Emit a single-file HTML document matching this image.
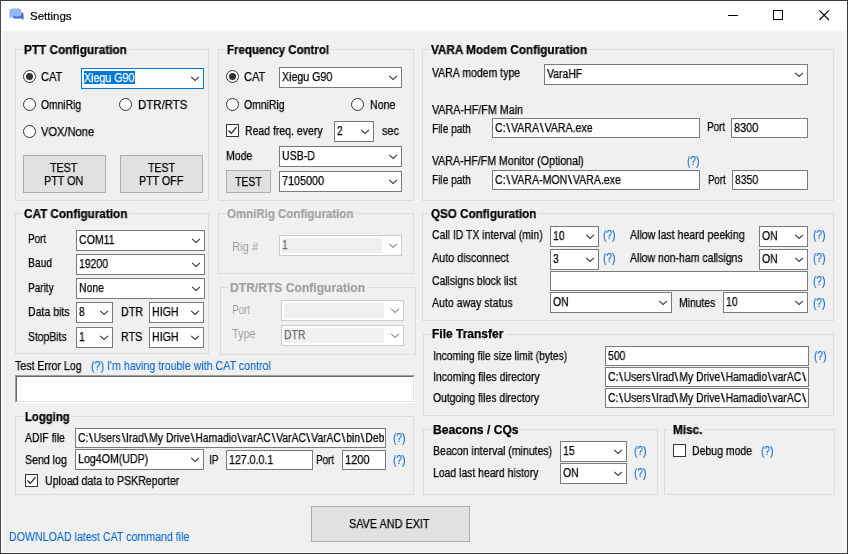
<!DOCTYPE html><html><head><meta charset="utf-8"><title>Settings</title><style>
html,body{margin:0;padding:0;background:#f0f0f0;}
body{width:848px;height:554px;overflow:hidden;font-family:"Liberation Sans",sans-serif;}
#win{position:relative;width:848px;height:554px;background:#f0f0f0;overflow:hidden;}
#win>*{position:absolute;box-sizing:content-box;}
.t{will-change:transform;-webkit-text-stroke:0.25px;font-size:12px;line-height:14px;color:#000;white-space:nowrap;transform-origin:0 0;display:block;}
.clip .t{position:absolute;}
.clip{overflow:hidden;}
.b{font-weight:bold;}
.dis{color:#a0a0a0;-webkit-text-stroke:0;}
.b.dis{-webkit-text-stroke:0.2px;}
.dis2{color:#6d6d6d;}
.lnk{color:#0066cc;-webkit-text-stroke:0.08px;}
.gb{border:1px solid #dcdcdc;}
.glbg{background:#f0f0f0;}
.cb{border:1px solid #7a7a7a;background:#fff;}
.cb .chev{position:absolute;right:3px;top:50%;margin-top:-2.5px;}
.cbf{border-color:#0078d7;}
.cbd{border-color:#cccccc;}
.cbd i{position:absolute;left:2px;top:2px;bottom:2px;right:19px;background:#f0f0f0;}
.tb{border:1px solid #7a7a7a;background:#fff;}
.btn{border:1px solid #adadad;background:#e1e1e1;}
.rd{width:11px;height:11px;border:1px solid #333;border-radius:50%;background:#fff;}
.rd b{position:absolute;left:2px;top:2px;width:7px;height:7px;border-radius:50%;background:#333;}
.ck{width:11px;height:11px;border:1px solid #333;background:#fff;}
.ck svg{position:absolute;left:0;top:0;}
.sel{background:#0078d7;}
.wt{color:#fff;}
.lb{border-top:1px solid #a0a0a0;border-left:1px solid #a0a0a0;border-right:1px solid #fff;border-bottom:1px solid #fff;background:#fff;}
.lb div{position:absolute;left:0;top:0;right:0;bottom:0;border-top:1px solid #696969;border-left:1px solid #696969;border-right:1px solid #e3e3e3;border-bottom:1px solid #e3e3e3;}
.t i{font-style:normal;display:inline-block;width:6.2px;text-align:center;transform:scaleX(1.35);}

</style></head><body><div id="win">
<div id="tbar" style="left:0;top:0;width:848px;height:31px;background:#fff"></div>
<svg id="ico" style="left:8px;top:7px" width="17" height="14" viewBox="0 0 17 14">
<path d="M6.500 5.500 h7 a2 2 0 0 1 2 2 v5.400 l-2.200 -1.500 h-6.800 a2 2 0 0 1 -2 -2 v-1.900 a2 2 0 0 1 2 -2z" fill="#3f66d0"/>
<path d="M3.700 1.600 h7.200 a2.500 2.500 0 0 1 2.500 2.500 v3 a2.500 2.500 0 0 1 -2.500 2.500 h-6.700 l-2.800 1.900 v-4.400 v-3 a2.500 2.500 0 0 1 2.300 -2.500z" fill="#92b6f5"/>
</svg>
<span class="tt" style="will-change:transform;left:30.2px;top:9px;-webkit-text-stroke:0.2px;font-size:11.5px;line-height:14px;color:#000;white-space:nowrap">Settings</span>
<svg style="left:720px;top:5px" width="120" height="22" viewBox="0 0 120 22">
<path d="M8 10.500 H18" stroke="#000" stroke-width="1" fill="none"/>
<rect x="53.500" y="5.500" width="9" height="9" stroke="#000" stroke-width="1" fill="none"/>
<path d="M99.300 5.300 L109 15 M109 5.300 L99.300 15" stroke="#000" stroke-width="1.1" fill="none"/>
</svg>
<div style="left:0;top:0;width:848px;height:1px;background:#3a3a3a"></div>
<div style="left:0;top:0;width:1px;height:554px;background:#4a4a4a"></div>
<div style="left:847px;top:0;width:1px;height:554px;background:#3a3a3a"></div>
<div style="left:0;top:553px;width:848px;height:1px;background:#3a3a3a"></div>
<div style="left:842px;top:31px;width:5px;height:521px;background:linear-gradient(90deg,#f2f2f2,#f9f9f9)"></div>
<div style="left:1px;top:552px;width:846px;height:1px;background:#fafafa"></div>
<div style="left:1px;top:31px;width:2px;height:521px;background:linear-gradient(90deg,#fbfbfb,#f4f4f4)"></div>

<div class="gb" style="left:15px;top:49px;width:192px;height:150px"></div>
<div class="glbg" style="left:22.5px;top:42px;width:106.25px;height:16px"></div>
<div class="rd" style="left:23px;top:70px"><b></b></div>
<div class="cb cbf" style="left:81px;top:68px;width:121px;height:19px"><svg class="chev" width="10" height="6" viewBox="0 0 10 6"><path d="M1.2 0.8 L5.1 4.5 L9 0.8" fill="none" stroke="#3a3a3a" stroke-width="1.1"/></svg></div>
<div class="sel" style="left:84px;top:71px;width:51px;height:13px"></div>
<div class="rd" style="left:23px;top:98px"></div>
<div class="rd" style="left:119px;top:98px"></div>
<div class="rd" style="left:23px;top:125px"></div>
<div class="btn" style="left:23px;top:155px;width:81px;height:36px"></div>
<div class="btn" style="left:120px;top:155px;width:81px;height:36px"></div>
<div class="gb" style="left:15px;top:213px;width:192px;height:139px"></div>
<div class="glbg" style="left:22px;top:206px;width:106.75px;height:16px"></div>
<div class="cb " style="left:76px;top:230px;width:127px;height:19px"><svg class="chev" width="10" height="6" viewBox="0 0 10 6"><path d="M1.2 0.8 L5.1 4.5 L9 0.8" fill="none" stroke="#3a3a3a" stroke-width="1.1"/></svg></div>
<div class="cb " style="left:76px;top:254px;width:127px;height:19px"><svg class="chev" width="10" height="6" viewBox="0 0 10 6"><path d="M1.2 0.8 L5.1 4.5 L9 0.8" fill="none" stroke="#3a3a3a" stroke-width="1.1"/></svg></div>
<div class="cb " style="left:76px;top:278px;width:127px;height:19px"><svg class="chev" width="10" height="6" viewBox="0 0 10 6"><path d="M1.2 0.8 L5.1 4.5 L9 0.8" fill="none" stroke="#3a3a3a" stroke-width="1.1"/></svg></div>
<div class="cb " style="left:76px;top:302px;width:35px;height:19px"><svg class="chev" width="10" height="6" viewBox="0 0 10 6"><path d="M1.2 0.8 L5.1 4.5 L9 0.8" fill="none" stroke="#3a3a3a" stroke-width="1.1"/></svg></div>
<div class="cb " style="left:149px;top:302px;width:53px;height:19px"><svg class="chev" width="10" height="6" viewBox="0 0 10 6"><path d="M1.2 0.8 L5.1 4.5 L9 0.8" fill="none" stroke="#3a3a3a" stroke-width="1.1"/></svg></div>
<div class="cb " style="left:76px;top:327px;width:35px;height:19px"><svg class="chev" width="10" height="6" viewBox="0 0 10 6"><path d="M1.2 0.8 L5.1 4.5 L9 0.8" fill="none" stroke="#3a3a3a" stroke-width="1.1"/></svg></div>
<div class="cb " style="left:149px;top:327px;width:53px;height:19px"><svg class="chev" width="10" height="6" viewBox="0 0 10 6"><path d="M1.2 0.8 L5.1 4.5 L9 0.8" fill="none" stroke="#3a3a3a" stroke-width="1.1"/></svg></div>
<div class="lb" style="left:15px;top:375px;width:398px;height:26px"><div></div></div>
<div class="gb" style="left:15px;top:416px;width:397px;height:77px"></div>
<div class="glbg" style="left:23px;top:409px;width:48px;height:16px"></div>
<div class="tb" style="left:75px;top:428px;width:309px;height:18px"></div>
<div class="cb " style="left:75px;top:449px;width:127px;height:19px"><svg class="chev" width="10" height="6" viewBox="0 0 10 6"><path d="M1.2 0.8 L5.1 4.5 L9 0.8" fill="none" stroke="#3a3a3a" stroke-width="1.1"/></svg></div>
<div class="tb" style="left:226px;top:450px;width:85px;height:18px"></div>
<div class="tb" style="left:342px;top:450px;width:42px;height:18px"></div>
<div class="ck" style="left:25px;top:474px"><svg width="11" height="11" viewBox="0 0 11 11"><path d="M1.5 5.5 L4.3 8.3 L9.5 2.2" fill="none" stroke="#222" stroke-width="1.3"/></svg></div>
<div class="btn" style="left:311px;top:506px;width:157px;height:34px"></div>
<div class="gb" style="left:218px;top:49px;width:194px;height:150px"></div>
<div class="glbg" style="left:225.5px;top:42px;width:105.5px;height:16px"></div>
<div class="rd" style="left:226px;top:70px"><b></b></div>
<div class="cb " style="left:279px;top:67px;width:121px;height:19px"><svg class="chev" width="10" height="6" viewBox="0 0 10 6"><path d="M1.2 0.8 L5.1 4.5 L9 0.8" fill="none" stroke="#3a3a3a" stroke-width="1.1"/></svg></div>
<div class="rd" style="left:226px;top:98px"></div>
<div class="rd" style="left:351px;top:98px"></div>
<div class="ck" style="left:226px;top:124px"><svg width="11" height="11" viewBox="0 0 11 11"><path d="M1.5 5.5 L4.3 8.3 L9.5 2.2" fill="none" stroke="#222" stroke-width="1.3"/></svg></div>
<div class="cb " style="left:334px;top:121px;width:38px;height:19px"><svg class="chev" width="10" height="6" viewBox="0 0 10 6"><path d="M1.2 0.8 L5.1 4.5 L9 0.8" fill="none" stroke="#3a3a3a" stroke-width="1.1"/></svg></div>
<div class="cb " style="left:279px;top:146px;width:121px;height:19px"><svg class="chev" width="10" height="6" viewBox="0 0 10 6"><path d="M1.2 0.8 L5.1 4.5 L9 0.8" fill="none" stroke="#3a3a3a" stroke-width="1.1"/></svg></div>
<div class="btn" style="left:226px;top:170px;width:43px;height:21px"></div>
<div class="cb " style="left:279px;top:171px;width:121px;height:19px"><svg class="chev" width="10" height="6" viewBox="0 0 10 6"><path d="M1.2 0.8 L5.1 4.5 L9 0.8" fill="none" stroke="#3a3a3a" stroke-width="1.1"/></svg></div>
<div class="gb" style="left:218px;top:213px;width:194px;height:59px"></div>
<div class="glbg" style="left:225px;top:206px;width:129.75px;height:16px"></div>
<div class="cb  cbd" style="left:279px;top:235px;width:121px;height:19px"><i></i><svg class="chev" width="10" height="6" viewBox="0 0 10 6"><path d="M1.2 0.8 L5.1 4.5 L9 0.8" fill="none" stroke="#909090" stroke-width="1.1"/></svg></div>
<div class="gb" style="left:220px;top:287px;width:194px;height:66px"></div>
<div class="glbg" style="left:228px;top:280px;width:138.5px;height:16px"></div>
<div class="cb  cbd" style="left:281px;top:300px;width:121px;height:19px"><i></i><svg class="chev" width="10" height="6" viewBox="0 0 10 6"><path d="M1.2 0.8 L5.1 4.5 L9 0.8" fill="none" stroke="#909090" stroke-width="1.1"/></svg></div>
<div class="cb  cbd" style="left:281px;top:325px;width:121px;height:19px"><i></i><svg class="chev" width="10" height="6" viewBox="0 0 10 6"><path d="M1.2 0.8 L5.1 4.5 L9 0.8" fill="none" stroke="#909090" stroke-width="1.1"/></svg></div>
<div class="gb" style="left:422px;top:49px;width:410px;height:150px"></div>
<div class="glbg" style="left:429.5px;top:42px;width:159.5px;height:16px"></div>
<div class="cb " style="left:544px;top:64px;width:262px;height:19px"><svg class="chev" width="10" height="6" viewBox="0 0 10 6"><path d="M1.2 0.8 L5.1 4.5 L9 0.8" fill="none" stroke="#3a3a3a" stroke-width="1.1"/></svg></div>
<div class="tb" style="left:492px;top:118px;width:206px;height:18px"></div>
<div class="tb" style="left:731px;top:118px;width:75px;height:18px"></div>
<div class="tb" style="left:492px;top:170px;width:206px;height:18px"></div>
<div class="tb" style="left:732px;top:170px;width:74px;height:18px"></div>
<div class="gb" style="left:422px;top:213px;width:410px;height:106px"></div>
<div class="glbg" style="left:429px;top:206px;width:108.75px;height:16px"></div>
<div class="cb " style="left:550px;top:226px;width:47px;height:19px"><svg class="chev" width="10" height="6" viewBox="0 0 10 6"><path d="M1.2 0.8 L5.1 4.5 L9 0.8" fill="none" stroke="#3a3a3a" stroke-width="1.1"/></svg></div>
<div class="cb " style="left:759px;top:226px;width:47px;height:19px"><svg class="chev" width="10" height="6" viewBox="0 0 10 6"><path d="M1.2 0.8 L5.1 4.5 L9 0.8" fill="none" stroke="#3a3a3a" stroke-width="1.1"/></svg></div>
<div class="cb " style="left:550px;top:249px;width:47px;height:19px"><svg class="chev" width="10" height="6" viewBox="0 0 10 6"><path d="M1.2 0.8 L5.1 4.5 L9 0.8" fill="none" stroke="#3a3a3a" stroke-width="1.1"/></svg></div>
<div class="cb " style="left:759px;top:249px;width:47px;height:19px"><svg class="chev" width="10" height="6" viewBox="0 0 10 6"><path d="M1.2 0.8 L5.1 4.5 L9 0.8" fill="none" stroke="#3a3a3a" stroke-width="1.1"/></svg></div>
<div class="tb" style="left:550px;top:271px;width:256px;height:18px"></div>
<div class="cb " style="left:550px;top:292px;width:120px;height:19px"><svg class="chev" width="10" height="6" viewBox="0 0 10 6"><path d="M1.2 0.8 L5.1 4.5 L9 0.8" fill="none" stroke="#3a3a3a" stroke-width="1.1"/></svg></div>
<div class="cb " style="left:723px;top:292px;width:83px;height:19px"><svg class="chev" width="10" height="6" viewBox="0 0 10 6"><path d="M1.2 0.8 L5.1 4.5 L9 0.8" fill="none" stroke="#3a3a3a" stroke-width="1.1"/></svg></div>
<div class="gb" style="left:423px;top:334px;width:409px;height:80px"></div>
<div class="glbg" style="left:430.75px;top:326.5px;width:74.75px;height:16px"></div>
<div class="tb" style="left:605px;top:346px;width:202px;height:18px"></div>
<div class="tb" style="left:605px;top:367px;width:202px;height:18px"></div>
<div class="tb" style="left:605px;top:388px;width:202px;height:18px"></div>
<div class="gb" style="left:423px;top:429px;width:233px;height:64px"></div>
<div class="glbg" style="left:431.25px;top:422px;width:89.0px;height:16px"></div>
<div class="cb " style="left:560px;top:441px;width:65px;height:19px"><svg class="chev" width="10" height="6" viewBox="0 0 10 6"><path d="M1.2 0.8 L5.1 4.5 L9 0.8" fill="none" stroke="#3a3a3a" stroke-width="1.1"/></svg></div>
<div class="cb " style="left:560px;top:463px;width:65px;height:19px"><svg class="chev" width="10" height="6" viewBox="0 0 10 6"><path d="M1.2 0.8 L5.1 4.5 L9 0.8" fill="none" stroke="#3a3a3a" stroke-width="1.1"/></svg></div>
<div class="gb" style="left:664px;top:429px;width:169px;height:64px"></div>
<div class="glbg" style="left:671.5px;top:422px;width:32.75px;height:16px"></div>
<div class="ck" style="left:673px;top:444px"></div>
<span class="t b" id="t0" style="left:24.20px;top:43px;transform:scaleX(0.9827);">PTT Configuration</span>
<span class="t " id="t1" style="left:41.45px;top:70px;transform:scaleX(0.9239);">CAT</span>
<span class="t wt" id="t2" style="left:84.20px;top:71px;transform:scaleX(0.8921);">Xiegu G90</span>
<span class="t " id="t3" style="left:41.45px;top:98px;transform:scaleX(0.8589);">OmniRig</span>
<span class="t " id="t4" style="left:137.95px;top:98px;transform:scaleX(0.9530);">DTR/RTS</span>
<span class="t " id="t5" style="left:41.45px;top:125px;transform:scaleX(0.9255);">VOX/None</span>
<span class="t " id="t6" style="left:50.45px;top:161px;transform:scaleX(0.8917);">TEST</span>
<span class="t " id="t7" style="left:44.20px;top:174px;transform:scaleX(0.8988);">PTT ON</span>
<span class="t " id="t8" style="left:147.70px;top:161px;transform:scaleX(0.8835);">TEST</span>
<span class="t " id="t9" style="left:138.95px;top:174px;transform:scaleX(0.8909);">PTT OFF</span>
<span class="t b" id="t10" style="left:23.70px;top:207px;transform:scaleX(0.9772);">CAT Configuration</span>
<span class="t " id="t11" style="left:27.95px;top:232px;transform:scaleX(0.8221);">Port</span>
<span class="t " id="t12" style="left:78.95px;top:233px;transform:scaleX(0.8800);">COM11</span>
<span class="t " id="t13" style="left:27.95px;top:256px;transform:scaleX(0.8598);">Baud</span>
<span class="t " id="t14" style="left:78.95px;top:257px;transform:scaleX(0.8700);">19200</span>
<span class="t " id="t15" style="left:27.95px;top:281px;transform:scaleX(0.8342);">Parity</span>
<span class="t " id="t16" style="left:78.95px;top:281px;transform:scaleX(0.8700);">None</span>
<span class="t " id="t17" style="left:27.95px;top:305px;transform:scaleX(0.8784);">Data bits</span>
<span class="t " id="t18" style="left:78.95px;top:305px;transform:scaleX(0.8700);">8</span>
<span class="t " id="t19" style="left:121.45px;top:305px;transform:scaleX(0.8958);">DTR</span>
<span class="t " id="t20" style="left:151.95px;top:305px;transform:scaleX(0.8867);">HIGH</span>
<span class="t " id="t21" style="left:27.95px;top:330px;transform:scaleX(0.8635);">StopBits</span>
<span class="t " id="t22" style="left:78.95px;top:330px;transform:scaleX(0.8700);">1</span>
<span class="t " id="t23" style="left:121.45px;top:330px;transform:scaleX(0.8972);">RTS</span>
<span class="t " id="t24" style="left:151.95px;top:330px;transform:scaleX(0.8867);">HIGH</span>
<span class="t " id="t25" style="left:14.95px;top:359px;transform:scaleX(0.8836);">Test Error Log</span>
<span class="t lnk" id="t26" style="left:90.95px;top:359px;transform:scaleX(0.8877);">(?) I'm having trouble with CAT control</span>
<span class="t b" id="t27" style="left:24.70px;top:410px;transform:scaleX(0.9424);">Logging</span>
<span class="t " id="t28" style="left:24.70px;top:431px;transform:scaleX(0.8660);">ADIF file</span>
<div class="clip" style="left:77.70px;top:429px;width:307.3px;height:18px"><span class="t " id="t29" style="left:0;top:2px;transform:scaleX(0.8620);">C:<i>\</i>Users<i>\</i>Irad<i>\</i>My Drive<i>\</i>Hamadio<i>\</i>varAC<i>\</i>VarAC<i>\</i>VarAC<i>\</i>bin<i>\</i>Deb</span></div>
<span class="t lnk" id="t30" style="left:393.20px;top:431px;transform:scaleX(0.8417);">(?)</span>
<span class="t " id="t31" style="left:24.70px;top:453px;transform:scaleX(0.8834);">Send log</span>
<span class="t " id="t32" style="left:77.95px;top:452px;transform:scaleX(0.8865);">Log4OM(UDP)</span>
<span class="t " id="t33" style="left:208.95px;top:453px;transform:scaleX(0.8463);">IP</span>
<span class="t " id="t34" style="left:228.70px;top:453px;transform:scaleX(0.8862);">127.0.0.1</span>
<span class="t " id="t35" style="left:316.20px;top:453px;transform:scaleX(0.8221);">Port</span>
<span class="t " id="t36" style="left:344.70px;top:453px;transform:scaleX(0.9212);">1200</span>
<span class="t lnk" id="t37" style="left:393.20px;top:453px;transform:scaleX(0.8417);">(?)</span>
<span class="t " id="t38" style="left:44.70px;top:474px;transform:scaleX(0.8833);">Upload data to PSKReporter</span>
<span class="t lnk" id="t39" style="left:9.45px;top:530px;transform:scaleX(0.8858);">DOWNLOAD latest CAT command file</span>
<span class="t " id="t40" style="left:348.95px;top:517px;transform:scaleX(0.9042);">SAVE AND EXIT</span>
<span class="t b" id="t41" style="left:227.20px;top:43px;transform:scaleX(0.9570);">Frequency Control</span>
<span class="t " id="t42" style="left:244.20px;top:70px;transform:scaleX(0.9239);">CAT</span>
<span class="t " id="t43" style="left:281.95px;top:70px;transform:scaleX(0.8877);">Xiegu G90</span>
<span class="t " id="t44" style="left:244.20px;top:98px;transform:scaleX(0.8696);">OmniRig</span>
<span class="t " id="t45" style="left:369.95px;top:98px;transform:scaleX(0.8837);">None</span>
<span class="t " id="t46" style="left:245.45px;top:124px;transform:scaleX(0.8747);">Read freq. every</span>
<span class="t " id="t47" style="left:336.95px;top:124px;transform:scaleX(0.8700);">2</span>
<span class="t " id="t48" style="left:382.45px;top:124px;transform:scaleX(0.9017);">sec</span>
<span class="t " id="t49" style="left:225.95px;top:149px;transform:scaleX(0.8774);">Mode</span>
<span class="t " id="t50" style="left:281.95px;top:149px;transform:scaleX(0.8797);">USB-D</span>
<span class="t " id="t51" style="left:234.70px;top:175px;transform:scaleX(0.8754);">TEST</span>
<span class="t " id="t52" style="left:281.95px;top:174px;transform:scaleX(0.9011);">7105000</span>
<span class="t b dis" id="t53" style="left:226.70px;top:207px;transform:scaleX(0.9573);">OmniRig Configuration</span>
<span class="t dis" id="t54" style="left:232.20px;top:240px;transform:scaleX(0.9405);">Rig #</span>
<span class="t dis2" id="t55" style="left:281.95px;top:238px;transform:scaleX(0.8700);">1</span>
<span class="t b dis" id="t56" style="left:229.70px;top:281px;transform:scaleX(1.0083);">DTR/RTS Configuration</span>
<span class="t dis" id="t57" style="left:232.20px;top:303px;transform:scaleX(0.8221);">Port</span>
<span class="t dis" id="t58" style="left:232.20px;top:327px;transform:scaleX(0.9071);">Type</span>
<span class="t dis2" id="t59" style="left:283.95px;top:328px;transform:scaleX(0.8700);">DTR</span>
<span class="t b" id="t60" style="left:431.20px;top:43px;transform:scaleX(0.9757);">VARA Modem Configuration</span>
<span class="t " id="t61" style="left:432.45px;top:66px;transform:scaleX(0.8766);">VARA modem type</span>
<span class="t " id="t62" style="left:546.95px;top:67px;transform:scaleX(0.8700);">VaraHF</span>
<span class="t " id="t63" style="left:432.45px;top:103px;transform:scaleX(0.8949);">VARA-HF/FM Main</span>
<span class="t " id="t64" style="left:432.45px;top:122px;transform:scaleX(0.8440);">File path</span>
<span class="t " id="t65" style="left:494.70px;top:121px;transform:scaleX(0.8821);">C:<i>\</i>VARA<i>\</i>VARA.exe</span>
<span class="t " id="t66" style="left:706.95px;top:120px;transform:scaleX(0.8221);">Port</span>
<span class="t " id="t67" style="left:733.70px;top:121px;transform:scaleX(0.9119);">8300</span>
<span class="t " id="t68" style="left:432.45px;top:154px;transform:scaleX(0.8838);">VARA-HF/FM Monitor (Optional)</span>
<span class="t lnk" id="t69" style="left:686.70px;top:154px;transform:scaleX(0.8417);">(?)</span>
<span class="t " id="t70" style="left:432.45px;top:173px;transform:scaleX(0.8440);">File path</span>
<span class="t " id="t71" style="left:494.70px;top:173px;transform:scaleX(0.8824);">C:<i>\</i>VARA-MON<i>\</i>VARA.exe</span>
<span class="t " id="t72" style="left:708.20px;top:173px;transform:scaleX(0.7994);">Port</span>
<span class="t " id="t73" style="left:734.70px;top:173px;transform:scaleX(0.8700);">8350</span>
<span class="t b" id="t74" style="left:430.70px;top:207px;transform:scaleX(0.9696);">QSO Configuration</span>
<span class="t " id="t75" style="left:431.70px;top:228px;transform:scaleX(0.8699);">Call ID TX interval (min)</span>
<span class="t " id="t76" style="left:552.95px;top:229px;transform:scaleX(0.8700);">10</span>
<span class="t lnk" id="t77" style="left:602.70px;top:228px;transform:scaleX(0.8417);">(?)</span>
<span class="t " id="t78" style="left:629.70px;top:228px;transform:scaleX(0.8810);">Allow last heard peeking</span>
<span class="t " id="t79" style="left:761.95px;top:229px;transform:scaleX(0.8700);">ON</span>
<span class="t lnk" id="t80" style="left:812.70px;top:228px;transform:scaleX(0.8417);">(?)</span>
<span class="t " id="t81" style="left:431.70px;top:251px;transform:scaleX(0.9000);">Auto disconnect</span>
<span class="t " id="t82" style="left:552.95px;top:252px;transform:scaleX(0.8700);">3</span>
<span class="t lnk" id="t83" style="left:602.70px;top:251px;transform:scaleX(0.8417);">(?)</span>
<span class="t " id="t84" style="left:630.20px;top:251px;transform:scaleX(0.8747);">Allow non-ham callsigns</span>
<span class="t " id="t85" style="left:761.95px;top:252px;transform:scaleX(0.8700);">ON</span>
<span class="t lnk" id="t86" style="left:812.70px;top:251px;transform:scaleX(0.8417);">(?)</span>
<span class="t " id="t87" style="left:431.70px;top:274px;transform:scaleX(0.8629);">Callsigns block list</span>
<span class="t lnk" id="t88" style="left:812.70px;top:274px;transform:scaleX(0.8417);">(?)</span>
<span class="t " id="t89" style="left:431.70px;top:296px;transform:scaleX(0.8819);">Auto away status</span>
<span class="t " id="t90" style="left:552.95px;top:295px;transform:scaleX(0.8700);">ON</span>
<span class="t " id="t91" style="left:679.45px;top:296px;transform:scaleX(0.8648);">Minutes</span>
<span class="t " id="t92" style="left:725.95px;top:295px;transform:scaleX(0.8700);">10</span>
<span class="t lnk" id="t93" style="left:812.70px;top:296px;transform:scaleX(0.8417);">(?)</span>
<span class="t b" id="t94" style="left:432.45px;top:327px;">File Transfer</span>
<span class="t " id="t95" style="left:433.20px;top:349px;transform:scaleX(0.8557);">Incoming file size limit (bytes)</span>
<span class="t " id="t96" style="left:607.70px;top:349px;transform:scaleX(0.8700);">500</span>
<span class="t lnk" id="t97" style="left:814.20px;top:349px;transform:scaleX(0.8417);">(?)</span>
<span class="t " id="t98" style="left:433.20px;top:370px;transform:scaleX(0.8687);">Incoming files directory</span>
<span class="t " id="t99" style="left:607.70px;top:370px;transform:scaleX(0.8639);">C:<i>\</i>Users<i>\</i>Irad<i>\</i>My Drive<i>\</i>Hamadio<i>\</i>varAC<i>\</i></span>
<span class="t " id="t100" style="left:433.20px;top:391px;transform:scaleX(0.8645);">Outgoing files directory</span>
<span class="t " id="t101" style="left:607.70px;top:391px;transform:scaleX(0.8639);">C:<i>\</i>Users<i>\</i>Irad<i>\</i>My Drive<i>\</i>Hamadio<i>\</i>varAC<i>\</i></span>
<span class="t b" id="t102" style="left:432.95px;top:423px;transform:scaleX(1.0106);">Beacons / CQs</span>
<span class="t " id="t103" style="left:433.20px;top:444px;transform:scaleX(0.8753);">Beacon interval (minutes)</span>
<span class="t " id="t104" style="left:562.95px;top:444px;transform:scaleX(0.8700);">15</span>
<span class="t lnk" id="t105" style="left:634.20px;top:444px;transform:scaleX(0.8417);">(?)</span>
<span class="t " id="t106" style="left:433.20px;top:466px;transform:scaleX(0.8677);">Load last heard history</span>
<span class="t " id="t107" style="left:562.95px;top:466px;transform:scaleX(0.8700);">ON</span>
<span class="t lnk" id="t108" style="left:634.20px;top:466px;transform:scaleX(0.8417);">(?)</span>
<span class="t b" id="t109" style="left:673.20px;top:423px;transform:scaleX(0.9778);">Misc.</span>
<span class="t " id="t110" style="left:692.45px;top:444px;transform:scaleX(0.8746);">Debug mode</span>
<span class="t lnk" id="t111" style="left:760.95px;top:444px;transform:scaleX(0.8417);">(?)</span>
</div></body></html>
